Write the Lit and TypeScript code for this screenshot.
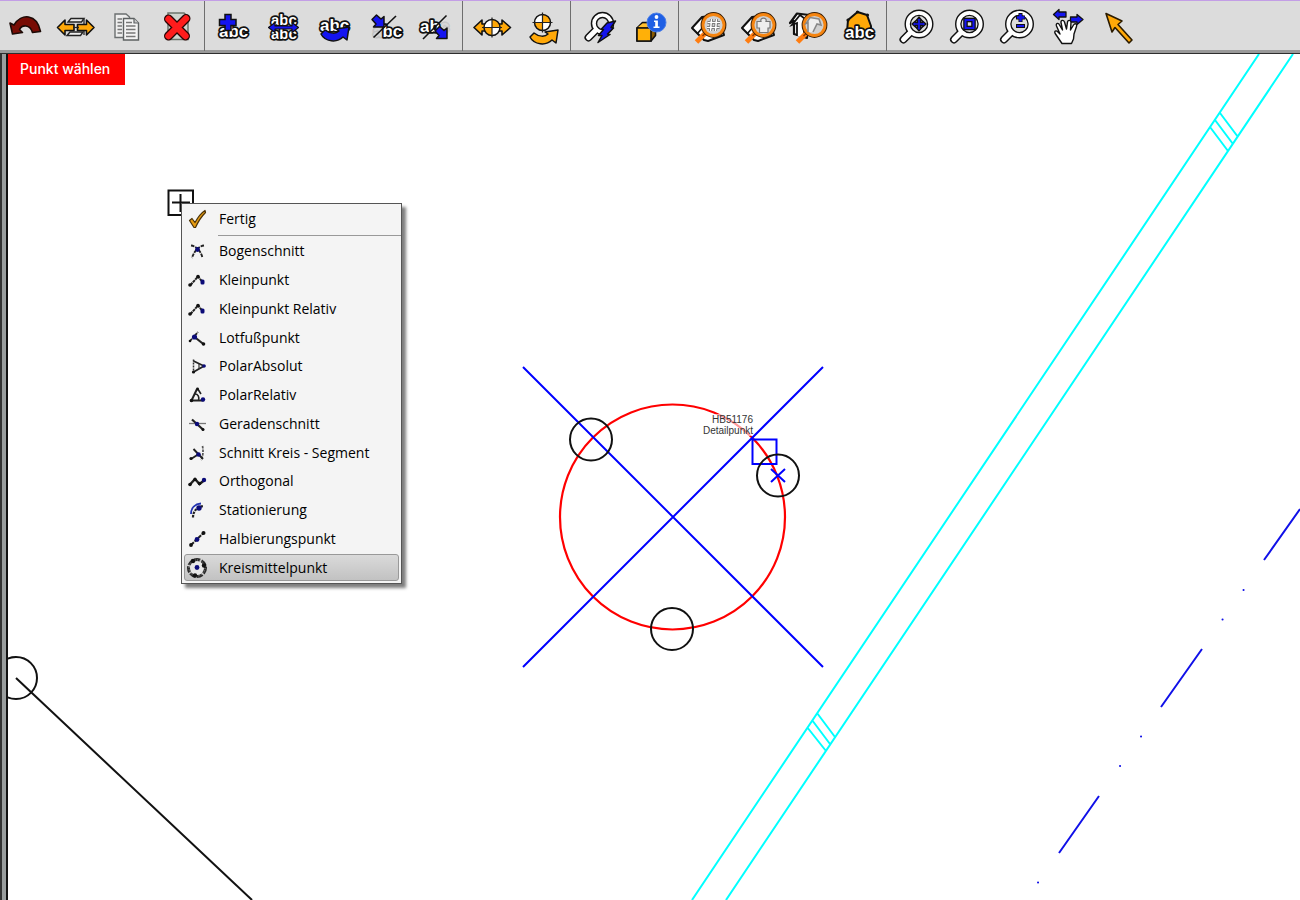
import { LitElement, html, svg, css, TemplateResult } from "lit";
import { customElement, property, state } from "lit/decorators.js";

type Glyph = TemplateResult;

interface Tool {
  label: string;
  art: Glyph;
}

interface ToolGroup {
  start: number;
  tools: Tool[];
}

const BLUE = "#1414f0";
const AMBER = "#ffa808";

const abc = (x: number, y: number, first = 1, last = 1, size = 17): Glyph => svg`
  <g font-family="'Liberation Sans', Arial, sans-serif" font-weight="bold" font-size=${size}
     fill="#fff" stroke="#111" stroke-width="3.4" stroke-linejoin="round" paint-order="stroke">
    <text x=${x} y=${y}><tspan fill-opacity=${first} stroke-opacity=${first * first}>a</tspan><tspan>b</tspan><tspan fill-opacity=${last} stroke-opacity=${last * last}>c</tspan></text>
  </g>`;

const quartered = (cx: number, cy: number, r: number): Glyph => svg`
  <circle cx=${cx} cy=${cy} r=${r} fill="#fff"/>
  <path d=${`M${cx} ${cy}V${cy - r}A${r} ${r} 0 0 1 ${cx + r} ${cy}Z M${cx} ${cy}V${cy + r}A${r} ${r} 0 0 1 ${cx - r} ${cy}Z`} fill=${AMBER}/>
  <circle cx=${cx} cy=${cy} r=${r} fill="none" stroke="#111" stroke-width="1.5"/>
  <path d=${`M${cx} ${cy - r - 2}V${cy + r + 2}M${cx - r - 2} ${cy}H${cx + r + 2}`} stroke="#222" stroke-width="1.2"/>`;

const swoop = (x: number, y: number, fill: string): Glyph => svg`
  <path d=${`M${x} ${y + 7}L${x + 4} ${y + 3}C${x + 9} ${y + 7} ${x + 15} ${y + 7} ${x + 18} ${y + 4}L${x + 15} ${y + 2}L${x + 28} ${y}L${x + 26} ${y + 13}L${x + 22} ${y + 10}C${x + 16} ${y + 16} ${x + 4} ${y + 15} ${x} ${y + 7}Z`}
    fill=${fill} stroke="#111" stroke-width="1.5" stroke-linejoin="round"/>`;

const lens = (cx: number, cy: number): Glyph => svg`
  <path d=${`M${cx - 7} ${cy + 7}L${cx - 15.5} ${cy + 15.5}`} stroke="#111" stroke-width="8" stroke-linecap="round"/>
  <circle cx=${cx} cy=${cy} r="11" fill="#dcdcdc" stroke="#111" stroke-width="7"/>
  <path d=${`M${cx - 7} ${cy + 7}L${cx - 15.5} ${cy + 15.5}`} stroke="#fff" stroke-width="5" stroke-linecap="round"/>
  <circle cx=${cx} cy=${cy} r="11" fill="#dcdcdc" stroke="#fff" stroke-width="4.2"/>
  <circle cx=${cx} cy=${cy} r="8.6" fill="#dcdcdc" stroke="#111" stroke-width="1.3"/>`;

const amberLens = (cx: number, cy: number): Glyph => svg`
  <path d=${`M${cx - 8} ${cy + 8}L${cx - 17} ${cy + 17}`} stroke="#ff7d10" stroke-width="5"/>
  <path d=${`M${cx - 7} ${cy + 7}L${cx - 11} ${cy + 11}`} stroke="#933c00" stroke-width="1.5"/>
  <circle cx=${cx} cy=${cy} r="10.5" fill="#d4d4d4" stroke="#3a1e04" stroke-width="4.8"/>
  <circle cx=${cx} cy=${cy} r="10.5" fill="#d0d0d0" stroke="#f58410" stroke-width="2.8"/>`;

const sheet = (x: number): Glyph => svg`
  <path d=${`M${x} 28L${x + 10} 17L${x + 26} 15L${x + 32} 35L${x + 16} 41L${x + 12} 40Z`} fill="#fff" stroke="#111" stroke-width="2" stroke-linejoin="round"/>
  <path d=${`M${x + 10} 17L${x + 12} 26L${x + 5} 34`} fill="none" stroke="#111" stroke-width="1.6"/>`;

const seArrow = (x: number, y: number): Glyph => svg`
  <path d=${`M${x} ${y + 4.5}L${x + 4.5} ${y}L${x + 9} ${y + 4}L${x + 12} ${y + 1.5}V${y + 12}H${x + 1.5}L${x + 4} ${y + 9}Z`}
    fill=${BLUE} stroke="#111" stroke-width="1.5" stroke-linejoin="round"/>`;

const GROUPS: ToolGroup[] = [
  {
    start: 0,
    tools: [
      { label: "Rückgängig", art: svg`<path d="M10 23L12.5 34L22.5 32.5L19.5 29.5C22 24.500 30 24 32.500 32.500L40.500 31.500C37 13.500 21 13 14 25Z" fill="#780c04" stroke="#1c0a06" stroke-width="1.6" stroke-linejoin="round"/>` },
      { label: "Verschieben", art: svg`
        <path d="M71 18.500H84L81.500 22H68Z" fill="#eee" stroke="#222" stroke-width="1.4"/>
        <path d="M70 32H83L80.500 35.500H67Z" fill="#eee" stroke="#222" stroke-width="1.4"/>
        <path d="M84 19V35" stroke="#333" stroke-width="1.4"/>
        <path d="M57.500 27.500L65 20V24.500H74V30.500H65V35Z M94 27.500L86.500 20V24.500H77.500V30.500H86.500V35Z" fill=${AMBER} stroke="#111" stroke-width="1.6" stroke-linejoin="round"/>
        <path d="M73 27.500H79" stroke="#222" stroke-width="1.2"/>` },
      { label: "Kopieren", art: svg`
        <path d="M115 14H126L129.500 17V37.500H115Z" fill="#eee" stroke="#6b6f70" stroke-width="1.4"/>
        <path d="M117.500 19H122M117.500 22.500H122M117.500 26H122M117.500 29.500H122M117.500 33H122" stroke="#777" stroke-width="1.5"/>
        <path d="M123.500 18.500H134L138.500 23V40H123.500Z" fill="#f4f4f4" stroke="#5d6162" stroke-width="1.4"/>
        <path d="M134 18.500V23H138.500" fill="#ccc" stroke="#5d6162" stroke-width="1.2"/>
        <path d="M126 22.500H132M126 26H135.500M126 29.500H135.500M126 33H135.500M126 36.500H135.500" stroke="#777" stroke-width="1.6"/>` },
      { label: "Löschen", art: svg`
        <path d="M168 13H184L188 16.500V39.500H168Z" fill="#cfd4cf" stroke="#6c746c" stroke-width="1.5"/>
        <path d="M168.500 19L185.500 36M186 18.500L168.500 36" stroke="#2a0505" stroke-width="9" stroke-linecap="round"/>
        <path d="M168.500 19L185.500 36M186 18.500L168.500 36" stroke="#ff1c1c" stroke-width="6.400" stroke-linecap="round"/>` },
    ],
  },
  {
    start: 209,
    tools: [
      { label: "Text hinzufügen", art: svg`${abc(219, 37)}
        <path d="M225 14.500H231V19.500H236V25.500H231V30.500H225V25.500H219.500V19.500H225Z" fill=${BLUE} stroke="#111" stroke-width="1.5"/>` },
      { label: "Text verschieben", art: svg`${abc(271, 25, 1, 1, 15)}${abc(271, 38.5, 1, 1, 15)}
        <path d="M268.500 27.500L275 22.500V26H292V22.500L298.500 27.500L292 32.500V29H275V32.500Z" fill=${BLUE} stroke="#111" stroke-width="1.200" stroke-linejoin="round"/>` },
      { label: "Text drehen", art: svg`${abc(320, 31)}${swoop(321, 27, BLUE)}` },
      { label: "Textanfang", art: svg`${abc(373, 37, 0.35)}
        <path d="M373.500 37.500L396 16" stroke="#111" stroke-width="1.600"/>${seArrow(372, 15)}` },
      { label: "Textende", art: svg`${abc(420, 32, 1, 0.3)}
        <path d="M423 39L446.500 15.500" stroke="#111" stroke-width="1.600"/>${seArrow(435, 26.5)}` },
    ],
  },
  {
    start: 467,
    tools: [
      { label: "Symbol verschieben", art: svg`
        <path d="M474 27.500L482 20V24H502V20L510.500 27.500L502 35V31H482V35Z" fill=${AMBER} stroke="#111" stroke-width="1.600" stroke-linejoin="round"/>
        ${quartered(492, 27.5, 8)}` },
      { label: "Symbol drehen", art: svg`${quartered(542.5, 22.5, 8)}${swoop(530, 30, AMBER)}` },
    ],
  },
  {
    start: 575,
    tools: [
      { label: "Schnellsuche", art: svg`
        <path d="M596 30L588.500 37.500" stroke="#111" stroke-width="8" stroke-linecap="round"/>
        <circle cx="602.500" cy="23.500" r="8.500" fill="none" stroke="#111" stroke-width="6.500"/>
        <path d="M596 30L588.500 37.500" stroke="#fff" stroke-width="5" stroke-linecap="round"/>
        <circle cx="602.500" cy="23.500" r="8.500" fill="none" stroke="#fff" stroke-width="3.600"/>
        <path d="M607 23L615.500 21L611 27.500L613.500 28L607.500 34L610 34.500L598 42.500L602 35.500L598.500 35.500L603.500 29.500L601.500 29Z" fill=${BLUE} stroke="#111" stroke-width="1.500" stroke-linejoin="round"/>` },
      { label: "Objektinfo", art: svg`
        <path d="M637 28L642.500 22.500H655.500V35.500L651 41H637Z" fill="#8a5a00" stroke="#111" stroke-width="1.600" stroke-linejoin="round"/>
        <path d="M637 28H651V41H637Z" fill="#ffb008" stroke="#111" stroke-width="1.600"/>
        <path d="M638 27L642.500 23.500H654L651 27Z" fill="#ffc030"/>
        <circle cx="656.500" cy="22.500" r="9.500" fill="#1f5fe4" stroke="#4b7fe8" stroke-width="1"/>
        <circle cx="656.500" cy="17" r="1.900" fill="#fff"/>
        <path d="M654 20.500H657.900V26.500H659.500V28H653.500V26.500H655.200V22H654Z" fill="#fff"/>` },
    ],
  },
  {
    start: 683,
    tools: [
      { label: "Nummer suchen", art: svg`${sheet(692)}${amberLens(713.500, 25)}
        <path d="M711.500 19L710.500 31M716.500 19L715.500 31M707.500 22.500H720M707 27.500H719.500" stroke="#555" stroke-width="3"/>
        <path d="M711.500 19L710.500 31M716.500 19L715.500 31M707.500 22.500H720M707 27.500H719.500" stroke="#fff" stroke-width="1.600"/>` },
      { label: "Eigentümer suchen", art: svg`${sheet(742)}${amberLens(763.500, 25)}
        <path d="M757 21.500H761C759.500 17 767.500 17 766 21.500H770V28H768V32.500H759.500V28H757Z" fill="#eee" stroke="#777" stroke-width="1.200"/>` },
      { label: "Gebäude suchen", art: svg`
        <path d="M790 23L797 13.500L809 15L812 24L807 22V38L794 34V21Z" fill="#fff" stroke="#111" stroke-width="2.200" stroke-linejoin="round"/>
        <path d="M797 36V23L792 25L800 15L809 22H804V38" fill="#fff" stroke="#111" stroke-width="1.800"/>
        ${amberLens(814.500, 25)}
        <path d="M808 32V22.500L806 23.500L810 17.500L819 19L821 25L817 24L813 32" fill="#eee" stroke="#888" stroke-width="1.600"/>` },
      { label: "Gebäudetext", art: svg`
        <path d="M848 20L857.500 12L867 15L871 26V32H847Z" fill=${AMBER} stroke="#111" stroke-width="2" stroke-linejoin="round"/>
        <g fill="#111"><circle cx="848" cy="20" r="1.600"/><circle cx="857.500" cy="12" r="1.600"/><circle cx="867.500" cy="15" r="1.600"/></g>
        ${abc(845, 37.500)}` },
    ],
  },
  {
    start: 891,
    tools: [
      { label: "Zoom alles", art: svg`${lens(919, 24)}
        <path d="M919 17L922 20.500H920.500V22.500H922.500V21L926 24L922.500 27V25.500H920.500V27.500H922L919 31L916 27.500H917.500V25.500H915.500V27L912 24L915.500 21V22.500H917.500V20.500H916Z" fill=${BLUE} stroke="#111" stroke-width="1.300"/>` },
      { label: "Zoom Fenster", art: svg`${lens(969.500, 24)}
        <rect x="965.500" y="20" width="8" height="8" fill="#dcdcdc" stroke="#111" stroke-width="4.600"/>
        <rect x="965.500" y="20" width="8" height="8" fill="none" stroke=${BLUE} stroke-width="2"/>` },
      { label: "Zoom dynamisch", art: svg`${lens(1019.500, 24)}
        <path d="M1020.500 13V22M1016 17.500H1025" stroke="#111" stroke-width="4"/>
        <path d="M1020.500 14V21.500M1017 17.500H1024.500" stroke=${BLUE} stroke-width="2.400"/>
        <path d="M1016 26H1025" stroke="#111" stroke-width="4"/>
        <path d="M1017 26H1024" stroke=${BLUE} stroke-width="2"/>` },
      { label: "Verschieben der Ansicht", art: svg`
        <path d="M1053.500 14.500L1059 9.500V12H1066V17H1059V19.500Z M1083 19.500L1077 24.500V22H1070.500V17H1077V14.500Z" fill=${BLUE} stroke="#111" stroke-width="1.300" stroke-linejoin="round"/>
        <path d="M1062 43.500L1055.500 34C1053.500 31 1056 30 1058 32L1060 34L1056.500 26C1055.500 23 1058.500 22.500 1059.500 25L1062.500 30L1061 22.500C1060.500 20 1063.500 19.500 1064.500 22L1066.500 29L1067.500 22C1068 19.500 1071 20 1071 22.500L1070.500 30L1073.500 25C1075 22.500 1077.500 24 1076.500 26.500L1074 34L1073.500 39L1071.500 43.500Z" fill="#fff" stroke="#111" stroke-width="1.400" stroke-linejoin="round"/>` },
      { label: "Auswählen", art: svg`
        <path d="M1106 13.500L1122 21L1118 24.500L1132 40L1129 43L1115 27.500L1112 32Z" fill=${AMBER} stroke="#2b1b00" stroke-width="1.600" stroke-linejoin="round"/>` },
    ],
  },
];

interface Entry {
  label: string;
  art: Glyph;
}

const dot = (x: number, y: number, r = 2, fill = "#111"): Glyph => svg`<circle cx=${x} cy=${y} r=${r} fill=${fill}/>`;
const NAVY = "#0b0b78";
const RISE = svg`<path d="M3.500 15L11 6.500L15.500 12" fill="none" stroke="#222" stroke-width="2" stroke-dasharray="3 0.600"/>
  ${dot(3, 15, 1.8)}${dot(11, 6.5, 1.8)}<rect x="13.500" y="9.500" width="4" height="5" rx="1.500" fill=${NAVY}/>`;

const ENTRIES: Entry[] = [
  { label: "Bogenschnitt", art: svg`<path d="M4 4.500C9 5 14 10 15.500 17M17 4.500C12 5 7 10 5 17" fill="none" stroke="#222" stroke-width="1.900" stroke-dasharray="3.500 1"/>${dot(10.5, 8.5, 2.4, NAVY)}` },
  { label: "Kleinpunkt", art: RISE },
  { label: "Kleinpunkt Relativ", art: RISE },
  { label: "Lotfußpunkt", art: svg`<path d="M3 13L11 4" stroke="#222" stroke-width="1.800" stroke-dasharray="3 0.800"/><path d="M7.500 9L17 16.500" stroke="#222" stroke-width="2.200"/>${dot(7.5, 9, 2.6, NAVY)}${dot(16.5, 16, 1.8)}${dot(3, 13, 1.3)}` },
  { label: "PolarAbsolut", art: svg`<path d="M6.500 3.500V17" stroke="#333" stroke-width="1.500" stroke-dasharray="2 1"/><path d="M6.500 5L17 10L6.500 16" fill="none" stroke="#222" stroke-width="1.800"/><path d="M12 8V13" stroke="#333" stroke-width="1.200"/>${dot(17, 10, 1.8, NAVY)}${dot(6.5, 16, 1.6)}` },
  { label: "PolarRelativ", art: svg`<path d="M10 4L4.500 15.500H16.500" fill="none" stroke="#222" stroke-width="2"/><path d="M10.500 3.500L14 9M8 9C11 9 12.500 12 11.500 15" fill="none" stroke="#222" stroke-width="1.600"/>${dot(10.5, 4, 1.4)}${dot(16, 14.5, 2.2, NAVY)}${dot(4.5, 15.5, 1.8)}` },
  { label: "Geradenschnitt", art: svg`<path d="M2 9.500H19" stroke="#777" stroke-width="1.300"/><path d="M5 5.500L16.500 16" stroke="#222" stroke-width="2.200"/>${dot(10, 10, 2.2, NAVY)}${dot(16, 15.5, 1.5)}` },
  { label: "Schnitt Kreis - Segment", art: svg`<path d="M15.500 3C16.500 8 16 14 14 17" fill="none" stroke="#555" stroke-width="1.700" stroke-dasharray="2.500 1"/><path d="M4 16L11 11.500M6.500 6L16 16" stroke="#222" stroke-width="1.900"/>${dot(11.5, 11.5, 2.3, NAVY)}${dot(4, 15.5, 1.6)}` },
  { label: "Orthogonal", art: svg`<path d="M3 13.500L8 8L12.500 13L17 9.500" fill="none" stroke="#222" stroke-width="2.400"/>${dot(3, 13.5, 1.8)}${dot(8, 8.5, 1.8)}${dot(12.5, 12.5, 1.8)}${dot(17, 9, 2.2, NAVY)}` },
  { label: "Stationierung", art: svg`<path d="M4 14C4 8 8 4 14 3.500" fill="none" stroke="#2233b0" stroke-width="1.800"/><path d="M6 17.500C6 11 10 7 16.500 6" fill="none" stroke="#222" stroke-width="2.200" stroke-dasharray="2.500 1"/>${dot(12, 8, 2.7, NAVY)}` },
  { label: "Halbierungspunkt", art: svg`<path d="M4 16L16.500 4" stroke="#222" stroke-width="2" stroke-dasharray="4 1"/>${dot(4, 16, 1.9)}${dot(10, 10.5, 2.4, NAVY)}${dot(16.5, 4, 2)}` },
  { label: "Kreismittelpunkt", art: svg`<circle cx="10" cy="10" r="8.500" fill="#e6e6e6" stroke="#2a2a2a" stroke-width="3" stroke-dasharray="6 1.400"/><circle cx="10" cy="10" r="8" fill="none" stroke="#999" stroke-width="1" stroke-dasharray="1 1.500"/>${dot(10, 9.5, 2.4, NAVY)}${dot(6, 3, 2.2)}${dot(17, 7.5, 2.2)}${dot(8, 17.5, 2.2)}` },
];

const CHECK = svg`<path d="M2.500 11.500L5 9.500L8 13.500C11 8 14 4 18 1.500L18.500 3.500C14 8 11 13 8.500 18.500L7 18.500Z" fill="#e69b10" stroke="#4a3208" stroke-width="1.200" stroke-linejoin="round"/>`;

@customElement("cad-toolbar")
export class CadToolbar extends LitElement {
  static styles = css`
    :host {
      display: block;
    }
    .bar {
      display: flex;
      background: #dcdcdc;
      border-top: 1px solid #c39ee6;
      border-bottom: 1px solid #2e2e2e;
      box-shadow: inset 0 -3px #999;
      padding-bottom: 2px;
      overflow: hidden;
    }
    .group {
      display: flex;
      padding: 0 3px 0 4px;
      border-right: 1px solid #6e6e6e;
    }
    .group:first-child {
      padding-left: 0;
      padding-right: 4px;
    }
    .group:last-child {
      border-right: 0;
    }
    .tool {
      flex: none;
      display: block;
      width: 50px;
      margin: 0;
      padding: 0;
      border: 0;
      background: none;
    }
    .art {
      display: block;
      width: 50px;
      height: 50px;
      fill: none;
    }
  `;

  render() {
    return html`<div class="bar" role="toolbar" aria-label="Werkzeuge">
      ${GROUPS.map(
        (g) => html`<div class="group">
          ${g.tools.map(
            (t, i) => html`<button class="tool" type="button" aria-label=${t.label}>
              <svg class="art" viewBox="${g.start + i * 50} 1 50 50" aria-hidden="true">${t.art}</svg>
            </button>`
          )}
        </div>`
      )}
    </div>`;
  }
}

@customElement("context-menu")
export class ContextMenu extends LitElement {
  @property() selected = "";

  static styles = css`
    :host {
      display: block;
    }
    .menu {
      width: 221px;
      box-sizing: border-box;
      border: 1px solid #555;
      background: #f4f4f4;
      box-shadow: 4px 4px 3px rgba(0, 0, 0, 0.5);
      padding-bottom: 1px;
    }
    .rule {
      height: 1px;
      margin: 2px 0 1px 36px;
      border: 0;
      background: #999;
    }
    .list {
      display: grid;
      grid-auto-rows: 1fr;
      height: 345px;
    }
    .item {
      display: flex;
      align-items: center;
      gap: 12px;
      min-height: 0;
      margin: 1px 2px;
      padding: 0 3px 0 2px;
      box-sizing: border-box;
      border: 1px solid transparent;
      border-radius: 3px;
      background: none;
      color: #000;
      font: 14px/20px "Open Sans", "Noto Sans", sans-serif;
      text-align: left;
      white-space: nowrap;
    }
    .done {
      height: 28px;
    }
    .item.selected {
      border-color: #999;
      background: linear-gradient(#dadada, #c2c2c2);
    }
    .art {
      flex: none;
      width: 20px;
      height: 20px;
      fill: none;
    }
  `;

  private pick(label: string) {
    this.dispatchEvent(new CustomEvent("pick", { detail: label }));
  }

  private item(e: Entry, extra = "") {
    const cls = `item ${extra} ${e.label === this.selected ? "selected" : ""}`;
    return html`<button class=${cls} type="button" role="menuitem" @mouseenter=${() => this.pick(e.label)}>
      <svg class="art" viewBox="0 0 20 20" aria-hidden="true">${e.art}</svg><span>${e.label}</span>
    </button>`;
  }

  render() {
    return html`<div class="menu" role="menu">
      ${this.item({ label: "Fertig", art: CHECK }, "done")}
      <hr class="rule" />
      <div class="list">${ENTRIES.map((e) => this.item(e))}</div>
    </div>`;
  }
}

@customElement("app-root")
export class AppRoot extends LitElement {
  @state() private selected = "Kreismittelpunkt";

  static styles = css`
    :host {
      display: flex;
      flex-direction: column;
      height: 100vh;
      overflow: hidden;
      background: #fff;
    }
    .work {
      flex: 1;
      display: flex;
      min-height: 0;
    }
    .edge {
      flex: none;
      width: 4px;
      background: #999d9d;
      border-left: 2px solid #333;
      border-right: 2px solid #111;
    }
    .pane {
      flex: 1;
      position: relative;
      overflow: hidden;
      background: #fff;
    }
    .plan {
      display: block;
      width: 100%;
      height: 100%;
      fill: none;
    }
    .prompt {
      position: absolute;
      left: 0;
      top: 0;
      padding: 5px 15px 6px 12px;
      background: #f00;
      color: #fff;
      font: 500 14px/20px Inter, sans-serif;
    }
    .popup {
      position: absolute;
      left: 173px;
      top: 149px;
    }
    .label {
      font: 10px "Liberation Sans", Arial, sans-serif;
      fill: #333;
      text-anchor: end;
    }
  `;

  render() {
    return html`
      <cad-toolbar></cad-toolbar>
      <main class="work">
        <div class="edge"></div>
        <div class="pane">
          <svg class="plan" role="img" aria-label="Lageplan">
            <g transform="translate(-8 -54)" stroke-width="2">
              <path stroke="#0ff" d="M1259 54L692 900M1293 54L726 900M1220 113L1238 137M1215 120L1233 144M1210 127L1228 151M817 713L835 737M812 720L830 744M807 727L826 751"/>
              <g stroke="#1010e8">
                <path d="M1300 509L1264 560M1202 649L1161 707M1099 796L1059 853"/>
                <path stroke-linecap="round" d="M1243.500 590h.1M1222.500 619.500h.1M1141 736.500h.1M1120 766h.1M1038 882.500h.1"/>
              </g>
              <circle cx="672.500" cy="517" r="112.500" stroke="#f00" stroke-width="2.200"/>
              <rect x="706" y="414" width="47" height="22" fill="#fff" fill-opacity="0.600"/>
              <text class="label" x="753" y="423" stroke="none">HB51176</text>
              <text class="label" x="753" y="434" stroke="none">Detailpunkt</text>
              <path stroke="#00f" d="M523 367L823 667M823 367L523 667M771 469L785 482M785 469L771 482M752.500 439.500H776.500V464H752.500Z"/>
              <g stroke="#111">
                <circle cx="591" cy="439.500" r="21"/>
                <circle cx="778" cy="475.500" r="21"/>
                <circle cx="672" cy="629" r="21"/>
                <circle cx="16" cy="678" r="21"/>
                <path d="M16 678L252 900"/>
                <path d="M168.500 190.500H193V215H168.500Z M172 202.500H190M180.500 194V212"/>
              </g>
            </g>
          </svg>
          <div class="prompt" role="status">Punkt wählen</div>
          <context-menu
            class="popup"
            .selected=${this.selected}
            @pick=${(e: CustomEvent<string>) => (this.selected = e.detail)}
          ></context-menu>
        </div>
      </main>
    `;
  }
}
